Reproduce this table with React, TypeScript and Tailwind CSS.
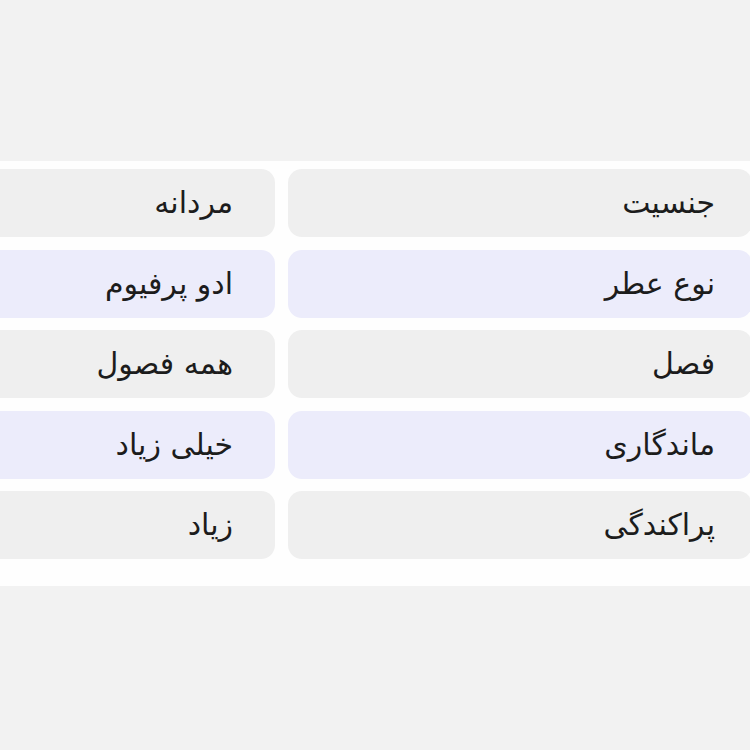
const rows = [
  { label: 'جنسیت', value: 'مردانه', tint: false },
  { label: 'نوع عطر', value: 'ادو پرفیوم', tint: true },
  { label: 'فصل', value: 'همه فصول', tint: false },
  { label: 'ماندگاری', value: 'خیلی زیاد', tint: true },
  { label: 'پراکندگی', value: 'زیاد', tint: false },
]

export default function App() {
  return (
    <div
      dir="rtl"
      className="w-[750px] h-[750px] overflow-hidden bg-[#f2f2f2] text-[#1c1c1c]"
      style={{ fontFamily: '"DejaVu Sans", "Noto Sans", sans-serif' }}
    >
      <div className="h-[161px]" />

      {/* Specs table */}
      <div className="bg-[#fefefe] pt-[8px] pb-[27px]">
        <div className="w-[941px] mr-[-2px] flex flex-col gap-[12.5px]">
          {rows.map((row) => {
            const bg = row.tint ? 'bg-[#ececfb]' : 'bg-[#efefef]'
            return (
              <div key={row.label} className="grid grid-cols-[464px_464px] gap-[13px] h-[68px]">
                <div className={`${bg} rounded-[14px] flex items-center pr-[37px] text-[30px] leading-none`}>
                  {row.label}
                </div>
                <div className={`${bg} rounded-[14px] flex items-center pr-[42px] text-[30px] leading-none`}>
                  {row.value}
                </div>
              </div>
            )
          })}
        </div>
      </div>
    </div>
  )
}
